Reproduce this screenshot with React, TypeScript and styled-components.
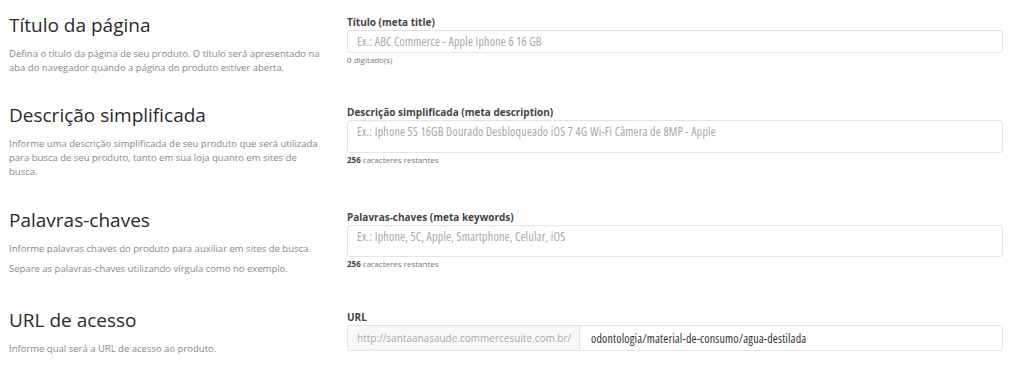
import styled, { createGlobalStyle } from 'styled-components'

const GlobalStyle = createGlobalStyle`
  html, body {
    margin: 0;
    padding: 0;
    background: #fff;
  }
  body {
    font-family: "Open Sans", "Liberation Sans", sans-serif;
    color: #333;
  }
  * {
    box-sizing: border-box;
  }
`

const Page = styled.div`
  padding: 13px 21px 0 9px;
`

const Section = styled.section<{ $space: number }>`
  display: grid;
  grid-template-columns: 338px 1fr;
  align-items: start;
  margin-bottom: ${(p) => p.$space}px;
`

const Info = styled.div`
  display: flex;
  flex-direction: column;
`

const Heading = styled.h2`
  margin: 0 0 10px;
  font-size: 19px;
  line-height: 24px;
  font-weight: 400;
  color: #2a2a2a;
`

const Desc = styled.p`
  margin: 0 0 6px;
  font-size: 9.5px;
  line-height: 14px;
  color: #888;
  max-width: 315px;
`

const Field = styled.div`
  display: flex;
  flex-direction: column;
  padding-top: 3px;
`

const Label = styled.label`
  font-size: 10px;
  line-height: 12px;
  font-weight: 700;
  color: #444;
  margin-bottom: 2px;
`

const Box = styled.div<{ $height: number; $top?: boolean }>`
  height: ${(p) => p.$height}px;
  border: 1px solid #e4e4e4;
  border-radius: 3px;
  background: #fff;
  box-shadow: inset 0 1px 1px rgba(0, 0, 0, 0.02);
  display: flex;
  align-items: ${(p) => (p.$top ? 'flex-start' : 'center')};
  padding: ${(p) => (p.$top ? '3px 9px' : '0 9px')};
  overflow: hidden;
`

const Placeholder = styled.span`
  font-size: 12px;
  line-height: 15px;
  font-stretch: 87.5%;
  letter-spacing: 0.2px;
  color: #a8a8a8;
  white-space: nowrap;
`

const Helper = styled.div`
  margin-top: 2px;
  font-size: 8px;
  line-height: 10px;
  color: #777;

  b {
    font-weight: 700;
    color: #444;
  }
`

const Group = styled.div`
  height: 26px;
  display: flex;
  border: 1px solid #e4e4e4;
  border-radius: 3px;
  overflow: hidden;
`

const Addon = styled.div`
  width: 232px;
  flex: none;
  display: flex;
  align-items: center;
  padding: 0 9px;
  background: #f8f8f8;
  border-right: 1px solid #e4e4e4;
  font-size: 10px;
  color: #aaa;
  white-space: nowrap;
`

const Value = styled.div`
  flex: 1;
  display: flex;
  align-items: center;
  padding: 0 11px;
  font-size: 12px;
  font-stretch: 87.5%;
  letter-spacing: 0.15px;
  color: #333;
  white-space: nowrap;
`

export default function App() {
  return (
    <>
      <GlobalStyle />
      <Page>
        <Section $space={22}>
          <Info>
            <Heading>Título da página</Heading>
            <Desc>
              Defina o título da página de seu produto. O título será apresentado na aba do
              navegador quando a página do produto estiver aberta.
            </Desc>
          </Info>
          <Field>
            <Label>Título (meta title)</Label>
            <Box $height={23}>
              <Placeholder>Ex.: ABC Commerce - Apple Iphone 6 16 GB</Placeholder>
            </Box>
            <Helper>0 digitado(s)</Helper>
          </Field>
        </Section>

        <Section $space={23}>
          <Info>
            <Heading>Descrição simplificada</Heading>
            <Desc>
              Informe uma descrição simplificada de seu produto que será utilizada para busca de
              seu produto, tanto em sua loja quanto em sites de busca.
            </Desc>
          </Info>
          <Field>
            <Label>Descrição simplificada (meta description)</Label>
            <Box $height={33} $top>
              <Placeholder>
                Ex.: Iphone 5S 16GB Dourado Desbloqueado iOS 7 4G Wi-Fi Câmera de 8MP - Apple
              </Placeholder>
            </Box>
            <Helper>
              <b>256</b> caracteres restantes
            </Helper>
          </Field>
        </Section>

        <Section $space={26}>
          <Info>
            <Heading>Palavras-chaves</Heading>
            <Desc>Informe palavras chaves do produto para auxiliar em sites de busca.</Desc>
            <Desc>Separe as palavras-chaves utilizando vírgula como no exemplo.</Desc>
          </Info>
          <Field>
            <Label>Palavras-chaves (meta keywords)</Label>
            <Box $height={32} $top>
              <Placeholder>Ex.: Iphone, 5C, Apple, Smartphone, Celular, iOS</Placeholder>
            </Box>
            <Helper>
              <b>256</b> caracteres restantes
            </Helper>
          </Field>
        </Section>

        <Section $space={0}>
          <Info>
            <Heading>URL de acesso</Heading>
            <Desc>Informe qual será a URL de acesso ao produto.</Desc>
          </Info>
          <Field>
            <Label>URL</Label>
            <Group>
              <Addon>http://santaanasaude.commercesuite.com.br/</Addon>
              <Value>odontologia/material-de-consumo/agua-destilada</Value>
            </Group>
          </Field>
        </Section>
      </Page>
    </>
  )
}
